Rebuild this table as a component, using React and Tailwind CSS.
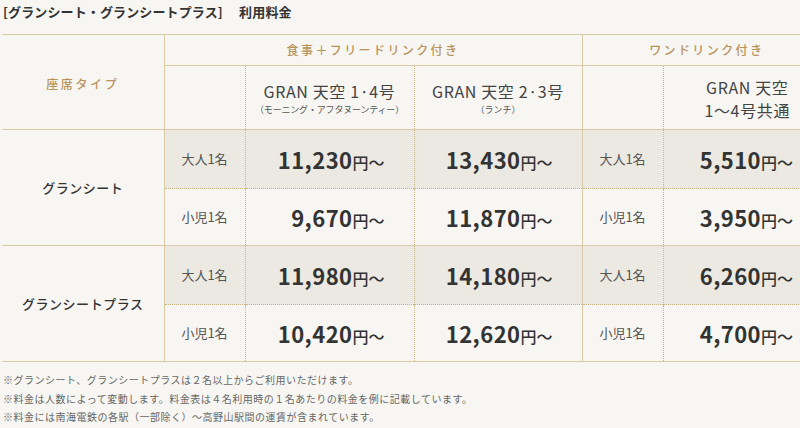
import React from "react";

const SL = "[border-left:1px_solid_#d9c9a5]";
const DL = "[border-left:1px_dotted_#cdb585]";
const ST = "[border-top:1px_solid_#d9c9a5]";
const DT = "[border-top:1px_dotted_#cdb585]";
const SB = "[border-bottom:1px_solid_#d9c9a5]";

const FONT = { fontFamily: '"Noto Sans CJK JP", "Noto Sans", sans-serif' };

function Price({ v }) {
  return (
    <span className="whitespace-nowrap text-[#333]">
      <span className="text-[22px] font-bold tracking-[0.02em]">{v}</span>
      <span className="text-[16px] font-medium">円〜</span>
    </span>
  );
}

function GroupRows({ name, rows }) {
  return (
    <>
      <tr className="h-[59px]">
        <td
          rowSpan={2}
          className={`${ST} ${SB} text-center text-[13px] font-medium tracking-[0.04em] text-[#333] bg-[#f7f6f2]`}
        >
          {name}
        </td>
        <td className={`${ST} ${SL} bg-[#ebe9e2] text-center text-[13px] text-[#555]`}>大人1名</td>
        <td className={`${ST} ${DL} bg-[#ebe9e2] text-right pr-[29px]`}>
          <Price v={rows[0][0]} />
        </td>
        <td className={`${ST} ${DL} bg-[#ebe9e2] text-right pr-[29px]`}>
          <Price v={rows[0][1]} />
        </td>
        <td className={`${ST} ${SL} bg-[#ebe9e2] text-center text-[13px] text-[#555]`}>大人1名</td>
        <td className={`${ST} ${DL} bg-[#ebe9e2] text-right pr-[38px]`}>
          <Price v={rows[0][2]} />
        </td>
      </tr>
      <tr className="h-[57px]">
        <td className={`${DT} ${SL} ${SB} bg-[#f7f6f2] text-center text-[13px] text-[#555]`}>小児1名</td>
        <td className={`${DT} ${DL} ${SB} bg-[#f7f6f2] text-right pr-[29px]`}>
          <Price v={rows[1][0]} />
        </td>
        <td className={`${DT} ${DL} ${SB} bg-[#f7f6f2] text-right pr-[29px]`}>
          <Price v={rows[1][1]} />
        </td>
        <td className={`${DT} ${SL} ${SB} bg-[#f7f6f2] text-center text-[13px] text-[#555]`}>小児1名</td>
        <td className={`${DT} ${DL} ${SB} bg-[#f7f6f2] text-right pr-[38px]`}>
          <Price v={rows[1][2]} />
        </td>
      </tr>
    </>
  );
}

export default function App() {
  return (
    <div className="w-[800px] h-[428px] overflow-hidden bg-[#f7f6f2]" style={FONT}>
      <div className="pl-[3px] pt-[3px] h-[34px] text-[13px] font-bold text-[#333] leading-[18px] tracking-[0.01em]">
        [グランシート・グランシートプラス]　 利用料金
      </div>
      <div className="pl-[2px]">
        <table className="table-fixed border-collapse w-[829px]">
          <colgroup>
            <col className="w-[162px]" />
            <col className="w-[81px]" />
            <col className="w-[169px]" />
            <col className="w-[168px]" />
            <col className="w-[81px]" />
            <col className="w-[168px]" />
          </colgroup>
          <tbody>
            <tr className="h-[31px]">
              <td
                rowSpan={2}
                className={`${ST} pt-[4px] text-center text-[12px] font-medium tracking-[0.22em] text-[#b8935b]`}
              >
                座席タイプ
              </td>
              <td
                colSpan={3}
                className={`${ST} ${SL} text-center text-[12px] font-medium tracking-[0.2em] text-[#b8935b]`}
              >
                食事＋フリードリンク付き
              </td>
              <td
                colSpan={2}
                className={`${ST} ${SL} text-center text-[12px] font-medium tracking-[0.2em] text-[#b8935b]`}
              >
                ワンドリンク付き
              </td>
            </tr>
            <tr className="h-[64px]">
              <td className={`${ST} ${SL}`}></td>
              <td className={`${ST} ${DL} text-center text-[#444]`}>
                <div className="text-[16px] leading-[24px] tracking-[0.04em]">GRAN 天空 1·4号</div>
                <div className="text-[9px] leading-[14px] text-[#555] tracking-[-0.02em]">（モーニング・アフタヌーンティー）</div>
              </td>
              <td className={`${ST} ${DL} text-center text-[#444]`}>
                <div className="text-[16px] leading-[24px] tracking-[0.04em]">GRAN 天空 2·3号</div>
                <div className="text-[9px] leading-[14px] text-[#555]">（ランチ）</div>
              </td>
              <td className={`${ST} ${SL}`}></td>
              <td className={`${ST} ${DL} text-center text-[#444] pt-[2px]`}>
                <div className="text-[16px] leading-[23px] tracking-[0.04em]">GRAN 天空</div>
                <div className="text-[16px] leading-[23px] tracking-[0.04em]">1〜4号共通</div>
              </td>
            </tr>
            <GroupRows
              name="グランシート"
              rows={[
                ["11,230", "13,430", "5,510"],
                ["9,670", "11,870", "3,950"],
              ]}
            />
            <GroupRows
              name="グランシートプラス"
              rows={[
                ["11,980", "14,180", "6,260"],
                ["10,420", "12,620", "4,700"],
              ]}
            />
          </tbody>
        </table>
      </div>
      <div className="pl-[3px] pt-[9px] text-[10px] leading-[18.5px] text-[#666] tracking-[0.05em]">
        <p>※グランシート、グランシートプラスは２名以上からご利用いただけます。</p>
        <p>※料金は人数によって変動します。料金表は４名利用時の１名あたりの料金を例に記載しています。</p>
        <p>※料金には南海電鉄の各駅（一部除く）〜高野山駅間の運賃が含まれています。</p>
      </div>
    </div>
  );
}
